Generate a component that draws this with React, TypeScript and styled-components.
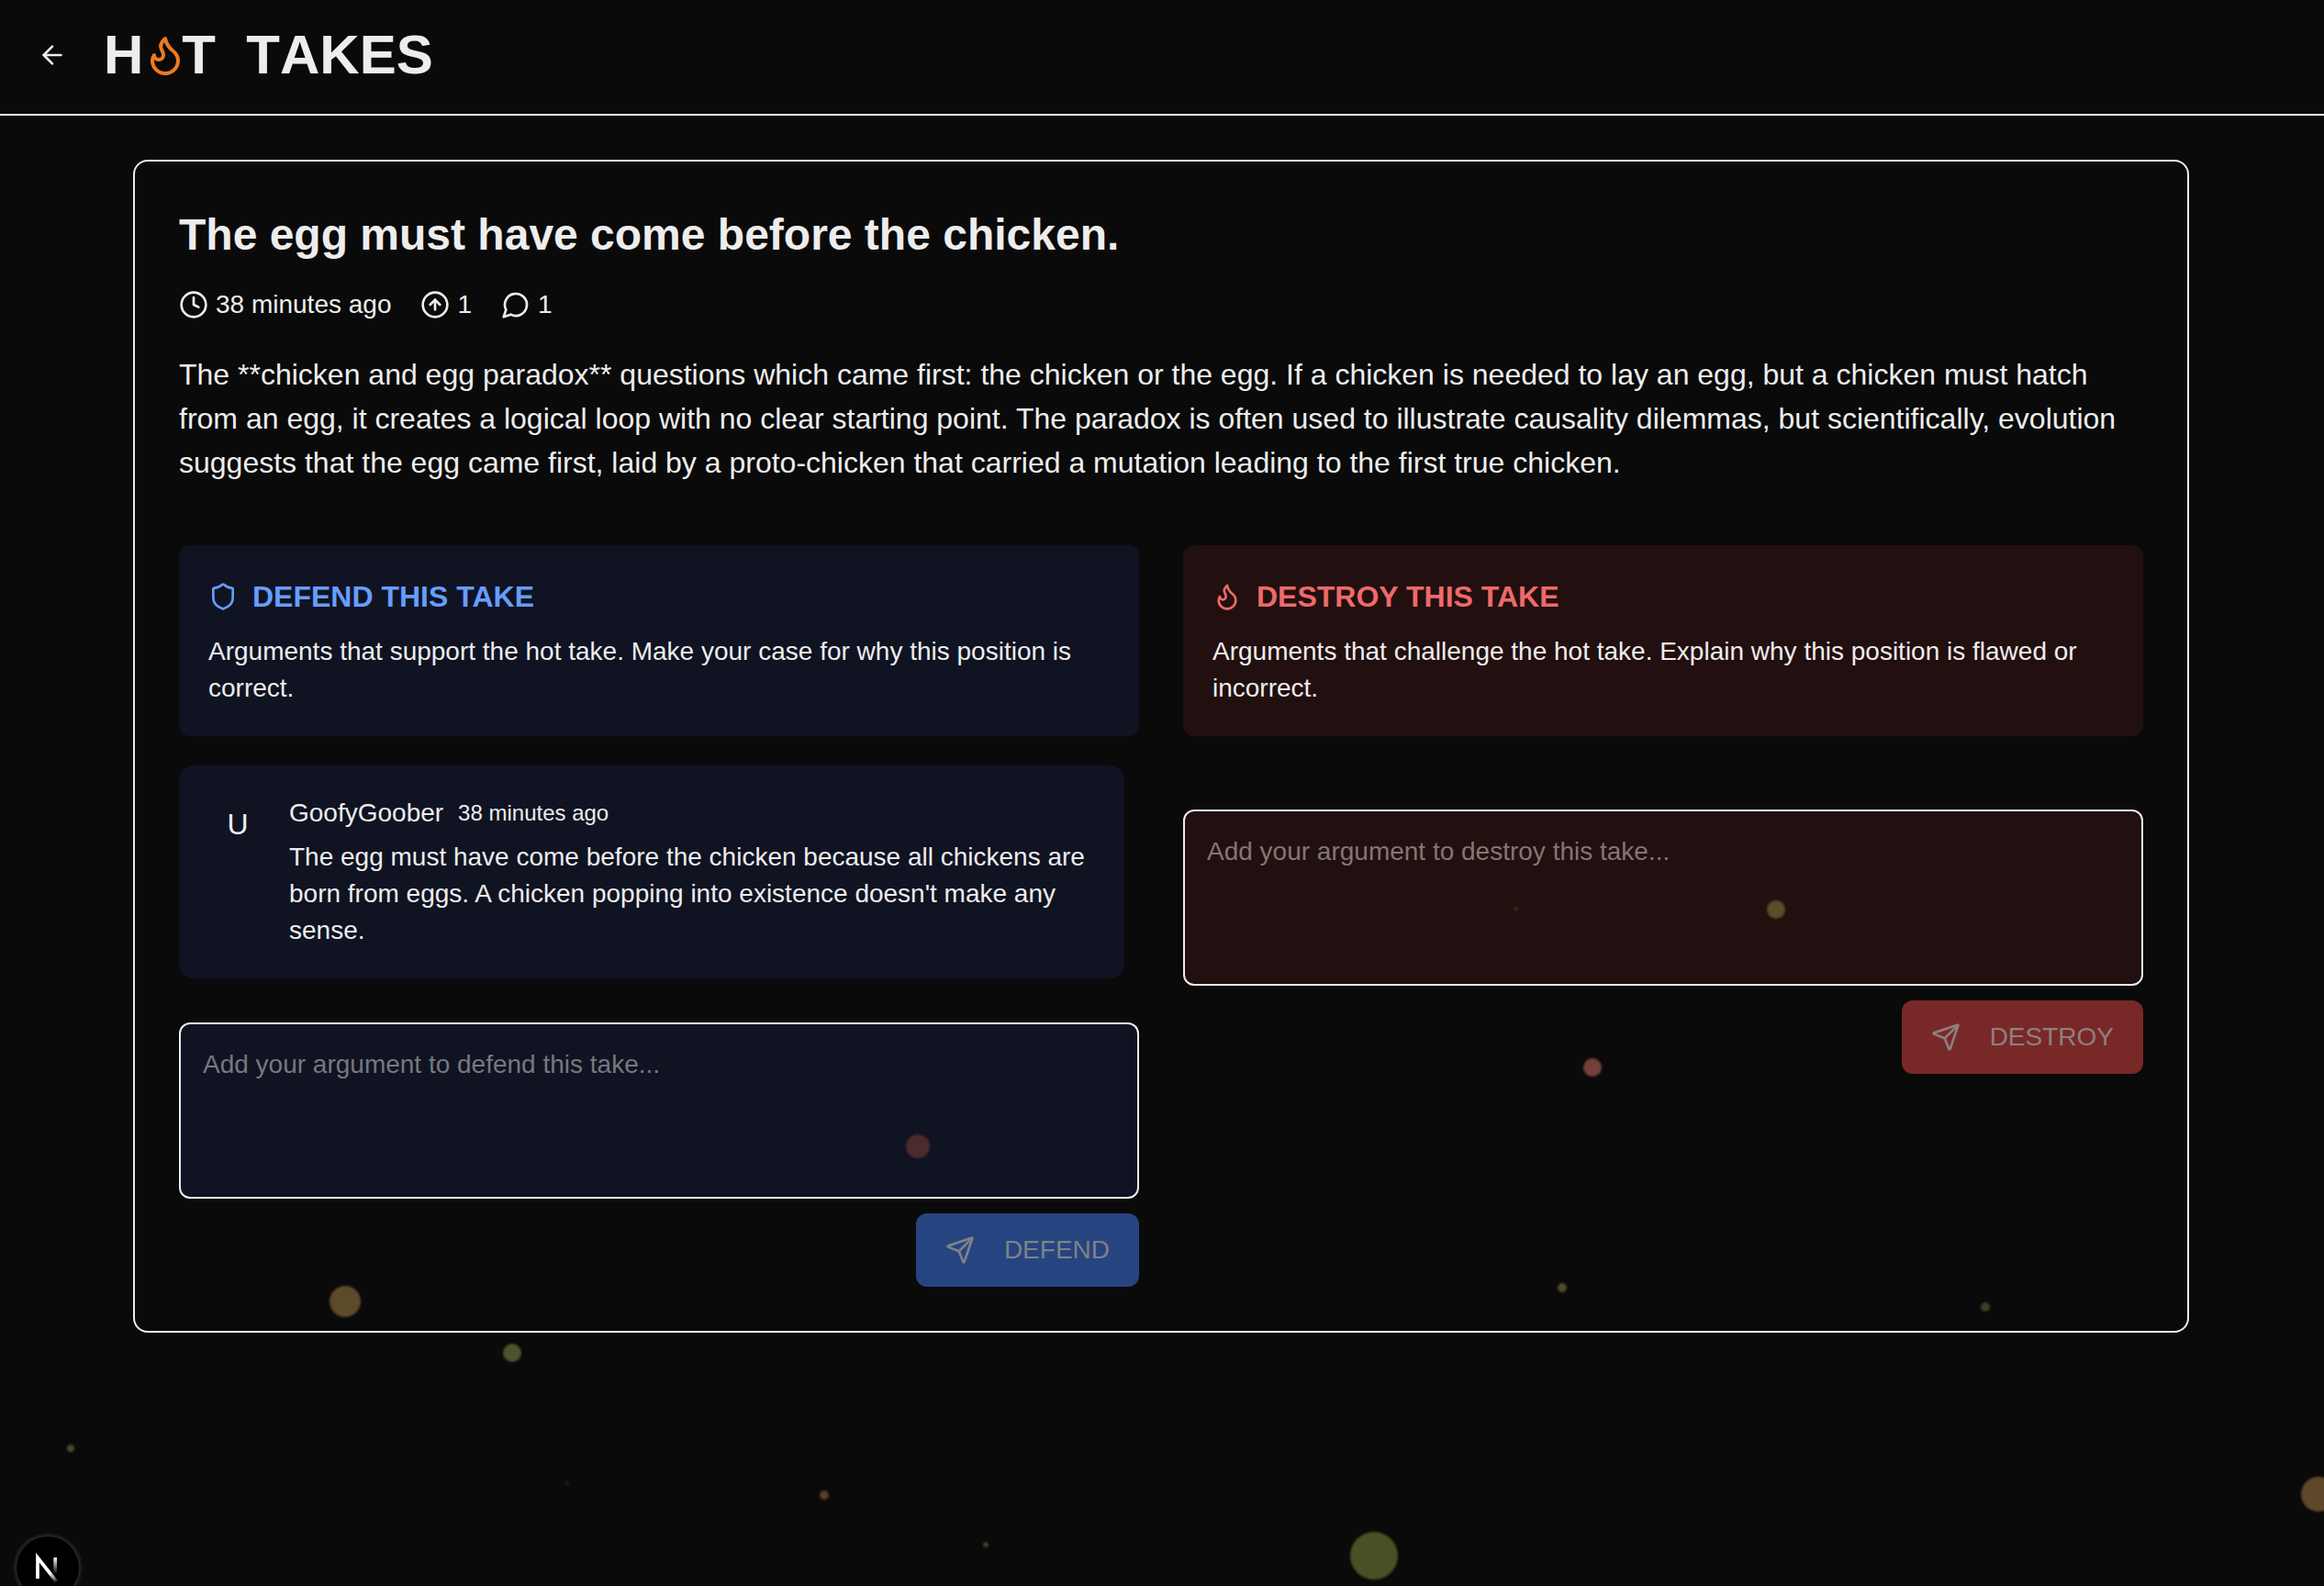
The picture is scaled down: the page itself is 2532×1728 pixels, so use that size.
import React from "react";
import styled, { createGlobalStyle } from "styled-components";
import { ArrowLeft, Clock, CircleArrowUp, Shield, Send } from "lucide-react";

type Side = "defend" | "destroy";

const palette = {
  page: "#0a0a0a",
  text: "#ededed",
  defend: { panel: "#101322", accent: "#669dff", button: "#264480", label: "#7e8288", hint: "#77787f" },
  destroy: { panel: "#220f0f", accent: "#ed6a6a", button: "#792828", label: "#8d7f7f", hint: "#827676" },
};

const GlobalStyle = createGlobalStyle`
  *, *::before, *::after { box-sizing: border-box; }
  body {
    margin: 0;
    background: ${palette.page};
    color: ${palette.text};
    font-family: "Liberation Sans", Arial, Helvetica, sans-serif;
    font-size: 28px;
    line-height: 40px;
  }
  h1, h2, h3, p { margin: 0; }
`;

const Page = styled.div`
  min-height: 100vh;
`;

const Header = styled.header`
  display: flex;
  align-items: center;
  gap: 16px;
  padding: 20px 17px 24px;
  border-bottom: 2px solid ${palette.text};
`;

const BackButton = styled.button`
  display: grid;
  place-items: center;
  width: 80px;
  height: 80px;
  padding: 0;
  border: 0;
  background: none;
  color: ${palette.text};
`;

const Brand = styled.h1`
  display: flex;
  align-items: center;
  font-size: 60px;
  line-height: 72px;
  font-weight: 700;
  font-kerning: none;
  white-space: pre;

  svg {
    color: #f07a1f;
    margin-right: -6px;
  }
`;

const Main = styled.main`
  max-width: 2306px;
  margin: 0 auto;
  padding: 48px 34px 48px 32px;
`;

const Card = styled.article`
  padding: 48px;
  border: 2px solid ${palette.text};
  border-radius: 16px;
`;

const Title = styled.h2`
  font-size: 48px;
  line-height: 64px;
  font-weight: 700;
`;

const Meta = styled.div`
  display: flex;
  gap: 32px;
  margin-top: 24px;
`;

const MetaItem = styled.span`
  display: flex;
  align-items: center;
  gap: 8px;
`;

const Summary = styled.p`
  margin-top: 32px;
  font-size: 32px;
  line-height: 48px;
`;

const Columns = styled.div`
  display: grid;
  grid-template-columns: 1fr 1fr;
  align-items: start;
  gap: 48px;
  margin-top: 66px;
`;

const SideColumn = styled.div`
  display: flex;
  flex-direction: column;
`;

const Intro = styled.section<{ $side: Side }>`
  padding: 32px;
  border-radius: 12px;
  background: ${(p) => palette[p.$side].panel};
`;

const IntroTitle = styled.h3<{ $side: Side }>`
  display: flex;
  align-items: center;
  gap: 16px;
  margin-bottom: 16px;
  font-size: 32px;
  line-height: 48px;
  font-weight: 700;
  color: ${(p) => palette[p.$side].accent};
`;

const CommentList = styled.div`
  margin-top: 32px;
  padding-right: 16px;
`;

const Comment = styled.article<{ $side: Side }>`
  display: flex;
  align-items: flex-start;
  gap: 24px;
  padding: 32px;
  border-radius: 16px;
  background: ${(p) => palette[p.$side].panel};
`;

const Avatar = styled.span`
  display: grid;
  place-items: center;
  flex: none;
  width: 64px;
  height: 64px;
  border-radius: 50%;
  font-size: 32px;
`;

const CommentBody = styled.div`
  display: grid;
  gap: 8px;
`;

const Byline = styled.div`
  display: flex;
  align-items: center;
  gap: 16px;

  time {
    font-size: 24px;
  }
`;

const ReplyForm = styled.form`
  display: flex;
  flex-direction: column;
  align-items: flex-end;
  gap: 16px;
  margin-top: 48px;
`;

const ReplyBox = styled.textarea<{ $side: Side }>`
  display: block;
  width: 100%;
  height: 192px;
  padding: 24px;
  border: 2px solid ${palette.text};
  border-radius: 12px;
  background: ${(p) => palette[p.$side].panel};
  color: ${palette.text};
  font: inherit;
  resize: none;

  &::placeholder {
    color: ${(p) => palette[p.$side].hint};
    opacity: 1;
  }
`;

const SendButton = styled.button<{ $side: Side }>`
  display: flex;
  align-items: center;
  gap: 32px;
  height: 80px;
  padding: 0 32px;
  border: 0;
  border-radius: 12px;
  background: ${(p) => palette[p.$side].button};
  color: ${(p) => palette[p.$side].label};
  font: inherit;
`;

const EmberLayer = styled.div`
  position: fixed;
  inset: 0;
  overflow: hidden;
  pointer-events: none;
`;

const Ember = styled.i<{ $x: number; $y: number; $size: number; $color: string }>`
  position: absolute;
  left: ${(p) => p.$x}px;
  top: ${(p) => p.$y}px;
  width: ${(p) => p.$size}px;
  height: ${(p) => p.$size}px;
  border-radius: 50%;
  background: ${(p) => p.$color};
  transform: translate(-50%, -50%);
  filter: blur(1px);
`;

const DevBadge = styled.button`
  position: fixed;
  left: 16px;
  bottom: -16px;
  width: 72px;
  height: 72px;
  padding: 0;
  border: 0;
  border-radius: 50%;
  background: #000;
  box-shadow: 0 0 0 2px #171717, inset 0 0 0 2px #242424;
`;

const StrokeIcon = ({ size, d }: { size: number; d: string }) => (
  <svg
    width={size}
    height={size}
    viewBox="0 0 24 24"
    fill="none"
    stroke="currentColor"
    strokeWidth="2"
    strokeLinecap="round"
    strokeLinejoin="round"
    aria-hidden="true"
  >
    <path d={d} />
  </svg>
);

const Flame = ({ size }: { size: number }) => (
  <StrokeIcon
    size={size}
    d="M8.5 14.5A2.5 2.5 0 0 0 11 12c0-1.38-.5-2-1-3-1.072-2.143-.224-4.054 2-6 .5 2.5 2 4.9 4 6.5 2 1.6 3 3.5 3 5.5a7 7 0 1 1-14 0c0-1.153.433-2.294 1-3a2.5 2.5 0 0 0 2.5 2.5z"
  />
);

const SpeechBubble = ({ size }: { size: number }) => (
  <StrokeIcon size={size} d="M7.9 20A9 9 0 1 0 4 16.1L2 22Z" />
);

const NextMark = () => (
  <svg width="72" height="72" viewBox="0 0 72 72" fill="none" aria-hidden="true">
    <defs>
      <linearGradient id="diagonal" x1="39" y1="41" x2="46" y2="52" gradientUnits="userSpaceOnUse">
        <stop stopColor="#fff" />
        <stop offset="0.6" stopColor="#fff" stopOpacity="0.5" />
        <stop offset="1" stopColor="#fff" stopOpacity="0" />
      </linearGradient>
      <linearGradient id="upright" x1="44" y1="25" x2="44" y2="43" gradientUnits="userSpaceOnUse">
        <stop stopColor="#fff" />
        <stop offset="1" stopColor="#fff" stopOpacity="0" />
      </linearGradient>
    </defs>
    <path d="M47 53 L25 25 V48" stroke="url(#diagonal)" strokeWidth="3.7" />
    <path d="M44.2 25 V49" stroke="url(#upright)" strokeWidth="3.7" />
  </svg>
);

const embers = [
  { x: 1935, y: 991, size: 20, color: "#5a4d2a" },
  { x: 1652, y: 990, size: 4, color: "#4a2f1c" },
  { x: 1735, y: 1163, size: 20, color: "#74403a" },
  { x: 1000, y: 1249, size: 26, color: "#4c2a2e" },
  { x: 376, y: 1418, size: 34, color: "#5d4a28" },
  { x: 558, y: 1474, size: 20, color: "#50522e" },
  { x: 77, y: 1578, size: 8, color: "#4b492a" },
  { x: 618, y: 1616, size: 4, color: "#3a1812" },
  { x: 1497, y: 1695, size: 52, color: "#4a5023" },
  { x: 1702, y: 1403, size: 10, color: "#504c2a" },
  { x: 2163, y: 1424, size: 10, color: "#3b4023" },
  { x: 2526, y: 1628, size: 38, color: "#5f4829" },
  { x: 898, y: 1629, size: 10, color: "#5e3a28" },
  { x: 1074, y: 1683, size: 6, color: "#3f4022" },
];

const sides: Record<Side, { title: string; text: string; hint: string; action: string; icon: React.ReactNode }> = {
  defend: {
    title: "DEFEND THIS TAKE",
    text: "Arguments that support the hot take. Make your case for why this position is correct.",
    hint: "Add your argument to defend this take...",
    action: "DEFEND",
    icon: <Shield size={32} />,
  },
  destroy: {
    title: "DESTROY THIS TAKE",
    text: "Arguments that challenge the hot take. Explain why this position is flawed or incorrect.",
    hint: "Add your argument to destroy this take...",
    action: "DESTROY",
    icon: <Flame size={32} />,
  },
};

const Column = ({ side, children }: { side: Side; children?: React.ReactNode }) => {
  const { title, text, hint, action, icon } = sides[side];
  return (
    <SideColumn>
      <Intro $side={side}>
        <IntroTitle $side={side}>
          {icon}
          {title}
        </IntroTitle>
        <p>{text}</p>
      </Intro>
      <CommentList>{children}</CommentList>
      <ReplyForm onSubmit={(e) => e.preventDefault()}>
        <ReplyBox $side={side} placeholder={hint} aria-label={title} />
        <SendButton $side={side} disabled>
          <Send size={32} />
          {action}
        </SendButton>
      </ReplyForm>
    </SideColumn>
  );
};

export default function App() {
  return (
    <Page>
      <GlobalStyle />
      <Header>
        <BackButton aria-label="Back">
          <ArrowLeft size={32} />
        </BackButton>
        <Brand>
          <span>H</span>
          <Flame size={48} />
          <span>{"T  TAKES"}</span>
        </Brand>
      </Header>
      <Main>
        <Card>
          <Title>The egg must have come before the chicken.</Title>
          <Meta>
            <MetaItem>
              <Clock size={32} />
              <time>38 minutes ago</time>
            </MetaItem>
            <MetaItem>
              <CircleArrowUp size={32} />1
            </MetaItem>
            <MetaItem>
              <SpeechBubble size={32} />1
            </MetaItem>
          </Meta>
          <Summary>
            The **chicken and egg paradox** questions which came first: the chicken or the egg. If a chicken is
            needed to lay an egg, but a chicken must hatch from an egg, it creates a logical loop with no clear
            starting point. The paradox is often used to illustrate causality dilemmas, but scientifically,
            evolution suggests that the egg came first, laid by a proto-chicken that carried a mutation leading to
            the first true chicken.
          </Summary>
          <Columns>
            <Column side="defend">
              <Comment $side="defend">
                <Avatar>U</Avatar>
                <CommentBody>
                  <Byline>
                    <span>GoofyGoober</span>
                    <time>38 minutes ago</time>
                  </Byline>
                  <p>
                    The egg must have come before the chicken because all chickens are born from eggs. A chicken
                    popping into existence doesn't make any sense.
                  </p>
                </CommentBody>
              </Comment>
            </Column>
            <Column side="destroy" />
          </Columns>
        </Card>
      </Main>
      <EmberLayer>
        {embers.map((e) => (
          <Ember key={`${e.x}-${e.y}`} $x={e.x} $y={e.y} $size={e.size} $color={e.color} />
        ))}
      </EmberLayer>
      <DevBadge aria-label="Open developer tools">
        <NextMark />
      </DevBadge>
    </Page>
  );
}
